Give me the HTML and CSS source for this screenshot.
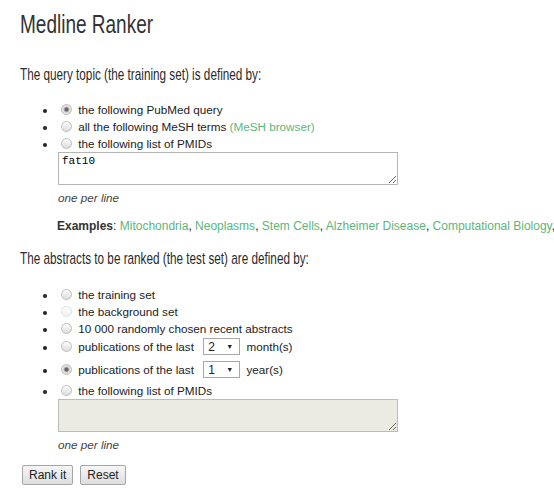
FILE: index.html
```html
<!DOCTYPE html>
<html lang="en">
<head>
  <meta charset="UTF-8">
  <title>Medline Ranker</title>
  <link rel="stylesheet" href="styles.css">
</head>
<body>
  <h1 class="title">Medline Ranker</h1>

  <form id="ranker-form">
    <h2 class="section">The query topic (the training set) is defined by:</h2>
    <ul class="choices">
      <li><label><input type="radio" name="training" checked> the following PubMed query</label></li>
      <li><label><input type="radio" name="training"> all the following MeSH terms</label> <a href="#">(MeSH browser)</a></li>
      <li>
        <label><input type="radio" name="training"> the following list of PMIDs</label><br>
        <textarea class="pmids" name="query">fat10</textarea>
        <p class="hint">one per line</p>
      </li>
    </ul>
    <p class="examples"><strong>Examples</strong>: <a href="#">Mitochondria</a>, <a href="#">Neoplasms</a>, <a href="#">Stem Cells</a>, <a href="#">Alzheimer Disease</a>, <a href="#">Computational Biology</a>,</p>

    <h2 class="section second">The abstracts to be ranked (the test set) are defined by:</h2>
    <ul class="choices">
      <li><label><input type="radio" name="test"> the training set</label></li>
      <li><label><input type="radio" name="test" disabled> the background set</label></li>
      <li><label><input type="radio" name="test"> 10 000 randomly chosen recent abstracts</label></li>
      <li class="with-select">
        <label><input type="radio" name="test"> publications of the last</label>
        <span class="picker"><select name="months"><option>2</option><option>6</option></select></span>
        month(s)
      </li>
      <li class="with-select last-select">
        <label><input type="radio" name="test" checked> publications of the last</label>
        <span class="picker"><select name="years"><option>1</option><option>2</option></select></span>
        year(s)
      </li>
      <li>
        <label><input type="radio" name="test"> the following list of PMIDs</label><br>
        <textarea class="pmids" name="testlist" disabled></textarea>
        <p class="hint">one per line</p>
      </li>
    </ul>

    <div class="actions">
      <button type="button" class="btn">Rank it</button>
      <button type="reset" class="btn">Reset</button>
    </div>
  </form>
</body>
</html>
```

FILE: styles.css
```css
body {
  font-family: "Liberation Sans", Arial, sans-serif;
  font-size: 11.7px;
  color: #222;
  margin: 0;
  padding: 0 18px;
  overflow-x: hidden;
}
/* no condensed face is installed, so the headings are narrowed */
.title {
  font-family: "Liberation Sans", Arial, sans-serif;
  font-weight: normal;
  font-size: 25px;
  color: #333;
  margin: 10px 0 0 2px;
  line-height: 28px;
  transform: scaleX(0.76);
  transform-origin: left center;
  white-space: nowrap;
}
.section {
  font-family: "Liberation Sans", Arial, sans-serif;
  font-weight: normal;
  font-size: 17px;
  color: #2a2a2a;
  margin: 27px 0 0 2px;
  line-height: 20px;
  transform: scaleX(0.69);
  transform-origin: left center;
  white-space: nowrap;
}
.section.second {
  margin-top: 16px;
}
.choices {
  margin: 16px 0 0;
  padding-left: 39px;
}
.section.second + .choices {
  margin-top: 17px;
}
.choices li {
  line-height: 17px;
}
.choices li.with-select {
  line-height: 20px;
}
.choices li.with-select + li.with-select {
  margin-top: 3px;
  margin-bottom: 2px;
}
a {
  color: #5cb67c;
  text-decoration: none;
}
input[type="radio"] {
  appearance: none;
  box-sizing: border-box;
  width: 11px;
  height: 11px;
  margin: 0 3px 0 4px;
  vertical-align: -1px;
  border: 1px solid #bdbdbd;
  border-radius: 50%;
  background: linear-gradient(#fdfdfd, #dcdcdc);
}
input[type="radio"]:checked {
  background: radial-gradient(circle, #666 0 1.6px, #b8b8b8 2.4px, #e6e6e6 3.5px, #dadada 5px);
}
input[type="radio"]:disabled {
  border-color: #e0e0e0;
  background: linear-gradient(#fefefe, #f0f0f0);
}
.pmids {
  display: block;
  box-sizing: border-box;
  width: 340px;
  height: 33px;
  margin: 0 0 0 1px;
  padding: 2px 3px;
  border: 1px solid #b5b5b5;
  font-family: "Liberation Mono", monospace;
  font-size: 11px;
  resize: vertical;
}
.pmids:disabled {
  background: #ebebe4;
  border-color: #bcbcbc;
}
.hint {
  font-style: italic;
  color: #444;
  margin: 6px 0 0 1px;
  line-height: 14px;
}
.examples {
  font-size: 12px;
  margin: 14px 0 0 39px;
  white-space: nowrap;
}
.examples strong {
  color: #333;
}
.picker {
  position: relative;
  display: inline-block;
  vertical-align: middle;
  margin: -2px 3px 0 6px;
}
.picker select {
  appearance: none;
  display: block;
  width: 37px;
  height: 17px;
  padding: 0 0 0 4px;
  border: 1px solid #a8a8a8;
  border-radius: 0;
  background: #fff;
  font-family: "Liberation Sans", Arial, sans-serif;
  font-size: 12px;
  color: #222;
}
.picker::after {
  content: "\25BC";
  position: absolute;
  right: 7px;
  top: 4px;
  font-size: 7px;
  line-height: 10px;
  color: #222;
  pointer-events: none;
}
.actions {
  margin: 13px 0 0 4px;
  display: flex;
  gap: 7px;
}
.btn {
  height: 20px;
  padding: 0 6px;
  border: 1px solid #a6a6a6;
  border-radius: 2px;
  background: linear-gradient(#f6f6f6, #dedede);
  font-family: "Liberation Sans", Arial, sans-serif;
  font-size: 12px;
  color: #222;
}
```
